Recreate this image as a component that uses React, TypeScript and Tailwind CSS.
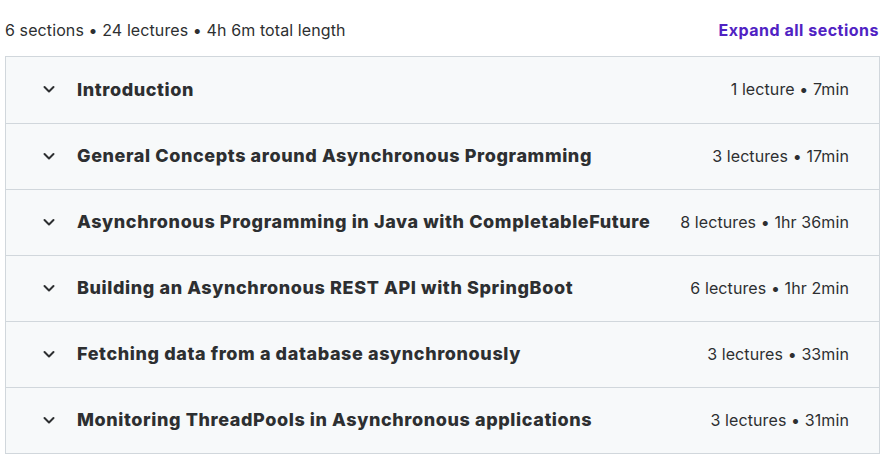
const sections = [
  { title: "Introduction", meta: "1 lecture • 7min" },
  { title: "General Concepts around Asynchronous Programming", meta: "3 lectures • 17min" },
  { title: "Asynchronous Programming in Java with CompletableFuture", meta: "8 lectures • 1hr 36min" },
  { title: "Building an Asynchronous REST API with SpringBoot", meta: "6 lectures • 1hr 2min" },
  { title: "Fetching data from a database asynchronously", meta: "3 lectures • 33min" },
  { title: "Monitoring ThreadPools in Asynchronous applications", meta: "3 lectures • 31min" },
];

function Chevron() {
  return (
    <svg viewBox="0 0 16 16" className="w-4 h-4 shrink-0" fill="none" stroke="#2d2f31" strokeWidth="2" strokeLinecap="round" strokeLinejoin="round">
      <path d="M3.5 6l4.5 4.5L12.5 6" />
    </svg>
  );
}

export default function App() {
  return (
    <div className="w-[885px] h-[459px] bg-white text-[#2d2f31] font-['Inter',sans-serif] pl-[5px] pr-[6px]">
      <div className="flex items-center justify-between h-[56px] pt-[4px]">
        <span className="text-[16px] tracking-[0.1px] text-[#2d2f31]">6 sections • 24 lectures • 4h 6m total length</span>
        <button className="text-[16px] font-bold tracking-[0.5px] text-[#5022c3]">Expand all sections</button>
      </div>
      <div className="border border-[#d1d7dc] w-[875px]">
        {sections.map((s, i) => (
          <div
            key={i}
            className={`flex items-center h-[66px] bg-[#f7f9fa] pl-[35px] pr-[30px] pb-[2px] ${i > 0 ? "border-t border-[#d1d7dc]" : ""}`}
          >
            <Chevron />
            <span className="ml-[20px] text-[18px] font-extrabold flex-1 tracking-[0.6px] text-[#2d2f31]">{s.title}</span>
            <span className="text-[16px] tracking-[0.1px]">{s.meta}</span>
          </div>
        ))}
      </div>
    </div>
  );
}
